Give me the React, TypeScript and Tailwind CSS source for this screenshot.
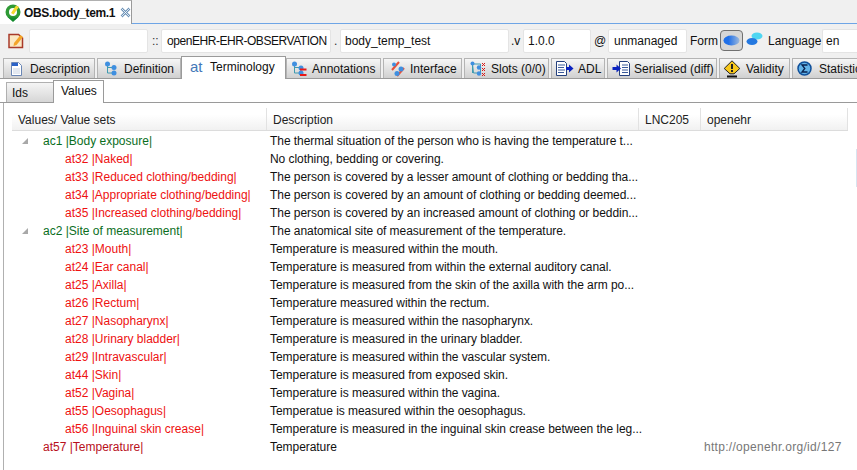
import React from 'react';

const tabs = [
  { label: 'Description', w: 'w-[92px] ml-0', pad: 'pl-[6px]', box: 'w-[20px]', icon: 'desc' },
  { label: 'Definition', w: 'w-[84px] ml-[2px]', pad: 'pl-[6px]', box: 'w-[20px]', icon: 'def' },
  { label: 'Terminology', w: 'w-[105px]', pad: 'pl-[8px]', box: 'w-[20px]', icon: 'at', active: true },
  { label: 'Annotations', w: 'w-[95px]', pad: 'pl-[4px]', box: 'w-[21px]', icon: 'ann' },
  { label: 'Interface', w: 'w-[79px] ml-[2px]', pad: 'pl-[6px]', box: 'w-[20px]', icon: 'int' },
  { label: 'Slots (0/0)', w: 'w-[85px] ml-[2px]', pad: 'pl-[5px]', box: 'w-[21px]', icon: 'slots' },
  { label: 'ADL', w: 'w-[54px] ml-[2px]', pad: 'pl-[4px]', box: 'w-[22px]', icon: 'adl' },
  { label: 'Serialised (diff)', w: 'w-[110px] ml-[2px]', pad: 'pl-[4px]', box: 'w-[22px]', icon: 'ser' },
  { label: 'Validity', w: 'w-[71px] ml-[2px]', pad: 'pl-[3px]', box: 'w-[23px]', icon: 'val' },
  { label: 'Statistics', w: 'w-[70px] ml-[2px]', pad: 'pl-[4px]', box: 'w-[22px]', icon: 'stat' },
];

const rows = [
  { k: 'ac', code: 'ac1', text: 'Body exposure', desc: 'The thermal situation of the person who is having the temperature t...' },
  { k: 'at', code: 'at32', text: 'Naked', desc: 'No clothing, bedding or covering.' },
  { k: 'at', code: 'at33', text: 'Reduced clothing/bedding', desc: 'The person is covered by a lesser amount of clothing or bedding tha...' },
  { k: 'at', code: 'at34', text: 'Appropriate clothing/bedding', desc: 'The person is covered by an amount of clothing or bedding deemed...' },
  { k: 'at', code: 'at35', text: 'Increased clothing/bedding', desc: 'The person is covered by an increased amount of clothing or beddin...' },
  { k: 'ac', code: 'ac2', text: 'Site of measurement', desc: 'The anatomical site of measurement of the temperature.' },
  { k: 'at', code: 'at23', text: 'Mouth', desc: 'Temperature is measured within the mouth.' },
  { k: 'at', code: 'at24', text: 'Ear canal', desc: 'Temperature is measured from within the external auditory canal.' },
  { k: 'at', code: 'at25', text: 'Axilla', desc: 'Temperature is measured from the skin of the axilla with the arm po...' },
  { k: 'at', code: 'at26', text: 'Rectum', desc: 'Temperature measured within the rectum.' },
  { k: 'at', code: 'at27', text: 'Nasopharynx', desc: 'Temperature is measured within the nasopharynx.' },
  { k: 'at', code: 'at28', text: 'Urinary bladder', desc: 'Temperature is measured in the urinary bladder.' },
  { k: 'at', code: 'at29', text: 'Intravascular', desc: 'Temperature is measured within the vascular system.' },
  { k: 'at', code: 'at44', text: 'Skin', desc: 'Temperature is measured from exposed skin.' },
  { k: 'at', code: 'at52', text: 'Vagina', desc: 'Temperature is measured within the vagina.' },
  { k: 'at', code: 'at55', text: 'Oesophagus', desc: 'Temperatue is measured within the oesophagus.' },
  { k: 'at', code: 'at56', text: 'Inguinal skin crease', desc: 'Temperature is measured in the inguinal skin crease between the leg...' },
  { k: 'top', code: 'at57', text: 'Temperature', desc: 'Temperature' },
];

const Nodes = ({ red }: { red?: boolean }) => (
  <svg width="16" height="16" viewBox="0 0 16 16">
    <path d="M3.500 3v9h6M3.500 6.500h6" stroke="#3f9bb0" fill="none" />
    <circle cx="3.500" cy="3" r="2.500" fill="#3f8fe0" />
    <circle cx="10" cy={red ? 7 : 6.500} r="2.500" fill="#3f8fe0" />
    <circle cx="10" cy="12" r="2.500" fill="#3f8fe0" />
    {red && <path d="M9 8.500h6.500M9 14h6.500" stroke="#e81818" strokeWidth="2" />}
  </svg>
);

const TabIcon = ({ name }: { name: string }) => {
  switch (name) {
    case 'desc':
      return (
        <svg width="13" height="14" viewBox="0 0 13 14">
          <path d="M1.500 0.500h7l3 3v10h-10z" fill="#fff" stroke="#6a86b5" />
          <path d="M2 1h6v3H2z" fill="#2a62c8" />
          <path d="M3 7h7M3 9h7M3 11h7" stroke="#c8d2e2" />
        </svg>
      );
    case 'def':
      return <Nodes />;
    case 'at':
      return <span className="text-[15px] leading-none text-[#4478b8] -mt-[2px]">at</span>;
    case 'ann':
      return <Nodes red />;
    case 'int':
      return (
        <svg width="16" height="16" viewBox="0 0 16 16">
          <path d="M2 9L9 1" stroke="#e8503a" strokeWidth="2" />
          <path d="M7 15L14 7" stroke="#e8503a" strokeWidth="2" />
          <circle cx="4" cy="3.500" r="2" fill="#3f8fe0" />
          <circle cx="11" cy="8" r="2.500" fill="#3f8fe0" />
          <circle cx="7" cy="12.500" r="2.500" fill="#3f8fe0" />
        </svg>
      );
    case 'slots':
      return (
        <svg width="16" height="16" viewBox="0 0 16 16">
          <path d="M2.500 3h8v9h-7zM2.500 3v9" stroke="#3f9bb0" fill="none" />
          <circle cx="2.500" cy="2.500" r="2" fill="#3f8fe0" />
          <circle cx="9" cy="6.500" r="2.200" fill="#3f8fe0" />
          <circle cx="9" cy="12.500" r="2.200" fill="#3f8fe0" />
          <path d="M12 2l3 3M15 2l-3 3M12 7l3 3M15 7l-3 3M12 12l3 3M15 12l-3 3" stroke="#d81818" />
        </svg>
      );
    case 'adl':
      return (
        <svg width="18" height="15" viewBox="0 0 18 15">
          <path d="M0.500 0.500h8l2 2v12h-10z" fill="#fff" stroke="#24407e" />
          <path d="M2 4h7M2 6.500h6M2 9h7M2 11.500h6" stroke="#3a5a9a" />
          <path d="M10 6h3V3.500L17.500 7.500 13 11.500V9h-3z" fill="#0a22c0" />
        </svg>
      );
    case 'ser':
      return (
        <svg width="18" height="15" viewBox="0 0 18 15">
          <path d="M7.500 0.500h8l2 2v12h-10z" fill="#fff" stroke="#24407e" />
          <path d="M10 4h6M10 6.500h6M10 9h6M10 11.500h6" stroke="#3a5a9a" />
          <path d="M0.500 6h4V3.500L9 7.500 4.500 11.500V9h-4z" fill="#0a22c0" />
        </svg>
      );
    case 'val':
      return (
        <svg width="18" height="18" viewBox="0 0 18 18">
          <path d="M9 0.800L16.800 8.500 11 13.800H7L1.200 8.500z" fill="#f8c81c" stroke="#222" />
          <path d="M4 16.500h10" stroke="#111" strokeWidth="2" />
          <path d="M9 4v5" stroke="#222" strokeWidth="2" />
          <rect x="8" y="10" width="2" height="2" fill="#222" />
        </svg>
      );
    default:
      return (
        <svg width="15" height="15" viewBox="0 0 15 15">
          <circle cx="7.500" cy="7.500" r="6.500" fill="#62b2e8" stroke="#0f4f9a" strokeWidth="1.500" />
          <path d="M10.500 4H5l2.800 3.500L5 11h5.500" fill="none" stroke="#08214e" strokeWidth="1.300" />
        </svg>
      );
  }
};

export default function App() {
  return (
    <div className="relative w-[857px] h-[470px] overflow-hidden bg-white text-[12px] leading-[14px] text-[#111] font-['Liberation_Sans',Arial,sans-serif]">
      {/* editor tab */}
      <div className="flex h-[24px] bg-[#f0f0f0] border-b border-[#6ea5e6]">
        <div className="flex items-center h-[24px] w-[132px] pl-[4px] bg-white border-r border-[#9a9a9a] border-t border-t-[#b0b0b0] font-bold text-[#111]">
          <svg width="18" height="18" viewBox="0 0 18 18" className="shrink-0">
            <circle cx="9" cy="8" r="7.500" fill="#2f9a35" />
            <circle cx="9" cy="8" r="4" fill="#fff" />
            <path d="M7 9l5-7.500 3 1.500-5.500 7.500z" fill="#f4da30" />
            <path d="M4 13.500h10L9 18z" fill="#128a2c" />
          </svg>
          <span className="ml-[2px] w-[96px] whitespace-nowrap tracking-[-0.35px]">OBS.body_tem.1</span>
          <svg width="11" height="11" viewBox="0 0 11 11" className="shrink-0">
            <path d="M1.500 1.500l8 8M9.500 1.500l-8 8" stroke="#6d93b8" strokeWidth="2.500" />
            <path d="M1.500 1.500l8 8M9.500 1.500l-8 8" stroke="#fff" strokeWidth="0.800" />
          </svg>
        </div>
      </div>

      {/* id toolbar */}
      <div className="flex items-center h-[32px] bg-[#f0f0f0] pl-[7px] pt-[1px]">
        <svg width="16" height="16" viewBox="0 0 16 16" className="shrink-0 ml-[1px]">
          <path d="M1 1.500h9.500L14.500 5v9.500H1z" fill="#fbe8c4" stroke="#a83a2a" strokeWidth="1.500" />
          <path d="M6 10l6.500-8 2.500 2-6.500 8-3 1z" fill="#f4a428" />
        </svg>
        <div className="ml-[5px] w-[119px] h-[24px] bg-white border border-[#e4e4e4] rounded-[2px]" />
        <span className="w-[9px] ml-[4px] text-[#333]">::</span>
        <div className="w-[170px] h-[24px] bg-white border border-[#e4e4e4] rounded-[2px] pl-[5px] flex items-center whitespace-nowrap tracking-[-0.45px]">openEHR-EHR-OBSERVATION</div>
        <span className="w-[6px] ml-[3px] text-[#333]">.</span>
        <div className="w-[169px] h-[24px] bg-white border border-[#e4e4e4] rounded-[2px] pl-[4px] flex items-center">body_temp_test</div>
        <span className="ml-[2px] w-[11px]">.v</span>
        <div className="ml-[1px] w-[68px] h-[24px] bg-white border border-[#e4e4e4] rounded-[2px] pl-[4px] flex items-center">1.0.0</div>
        <span className="ml-[3px] w-[14px]">@</span>
        <div className="w-[79px] h-[24px] bg-white border border-[#e4e4e4] rounded-[2px] pl-[5px] flex items-center">unmanaged</div>
        <span className="ml-[3px] w-[30px]">Form</span>
        <div className="flex items-center justify-center w-[23px] h-[21px] -mt-[1px] bg-[#d6d6d6] border border-[#707070] rounded-[4px]">
          <svg width="17" height="11" viewBox="0 0 17 11">
            <defs>
              <linearGradient id="formBlue" x1="0" x2="1">
                <stop offset="0.3" stopColor="#1f6fe8" />
                <stop offset="1" stopColor="#9cb8dc" />
              </linearGradient>
            </defs>
            <ellipse cx="8.500" cy="5.500" rx="8" ry="5" fill="url(#formBlue)" />
          </svg>
        </div>
        <svg width="17" height="14" viewBox="0 0 17 14" className="ml-[3px] shrink-0 -mt-[3px]">
          <ellipse cx="11" cy="4" rx="5.500" ry="3.500" fill="#4fd6f2" />
          <ellipse cx="6" cy="9.500" rx="5.500" ry="3.500" fill="#2478e0" />
        </svg>
        <span className="ml-[5px] w-[54px]">Language</span>
        <div className="w-[35px] h-[24px] bg-white border border-[#e4e4e4] border-r-0 rounded-l-[2px] pl-[3px] flex items-center">en</div>
      </div>

      {/* main tabs */}
      <div className="flex items-end h-[23px] bg-[#f0f0f0] pl-[3px] border-b border-[#9a9a9a]">
        {tabs.map(t => (
          <div
            key={t.label}
            className={
              t.active
                ? `${t.w} ${t.pad} shrink-0 h-[23px] -mb-px flex items-center pb-[2px] bg-white border border-b-0 border-[#9a9a9a] whitespace-nowrap`
                : `${t.w} ${t.pad} shrink-0 h-[20px] flex items-center bg-gradient-to-b from-[#f6f6f6] to-[#d0d0d0] border border-b-0 border-[#b4b4b4] whitespace-nowrap`
            }
          >
            <span className={`${t.box} shrink-0 flex items-center`}>
              <TabIcon name={t.icon} />
            </span>
            <span>{t.label}</span>
          </div>
        ))}
      </div>

      {/* sub tabs */}
      <div className="flex items-end h-[24px] pl-[6px] border-b border-[#9a9a9a]">
        <div className="w-[47px] h-[20px] pl-[5px] flex items-center bg-gradient-to-b from-[#f5f5f5] to-[#d6d6d6] border-t border-l border-[#b0b0b0]">Ids</div>
        <div className="w-[51px] h-[23px] -mb-px pl-[7px] pb-[3px] flex items-center bg-white border border-b-0 border-[#9a9a9a]">Values</div>
      </div>

      {/* table */}
      <div className="ml-[3px] border-l border-[#b0b0b0] h-[367px] pl-[8px] pt-[5px]">
        <div className="grid grid-cols-[255px_372px_62px_147px] w-[836px] h-[23px] bg-gradient-to-b from-white from-30% to-[#f1f1f1] border-b border-[#dcdcdc]">
          {['Values/ Value sets', 'Description', 'LNC205', 'openehr'].map(h => (
            <div key={h} className="flex items-center h-[22px] pl-[6px] pt-[2px] border-r border-[#e2e2e2] text-[#222]">{h}</div>
          ))}
        </div>
        <div className="flex flex-col pt-[1px]">
          {rows.map(r => (
            <div key={r.code} className="grid grid-cols-[255px_1fr] h-[18px] items-center whitespace-nowrap">
              <div className={`flex items-center ${r.k === 'at' ? 'pl-[53px] text-[#ee1111]' : r.k === 'ac' ? 'pl-[10px] text-[#0b6e1e]' : 'pl-[31px] text-[#b8101c]'}`}>
                {r.k === 'ac' && (
                  <svg width="21" height="8" viewBox="0 0 21 8" className="shrink-0">
                    <path d="M0 7L6 1v6z" fill="#a8a8a8" />
                  </svg>
                )}
                <span>{r.code} |{r.text}|</span>
              </div>
              <div className="pl-[3px] tracking-[-0.05px]">{r.desc}</div>
            </div>
          ))}
        </div>
      </div>

      {/* namespace link over the last row, and the faint scroll mark at the edge */}
      <div className="absolute left-[704px] top-[440px] text-[#777] tracking-[0.3px]">http://openehr.org/id/127</div>
      <div className="absolute right-0 top-[149px] w-px h-[38px] bg-[#d8e4f0]" />
    </div>
  );
}
